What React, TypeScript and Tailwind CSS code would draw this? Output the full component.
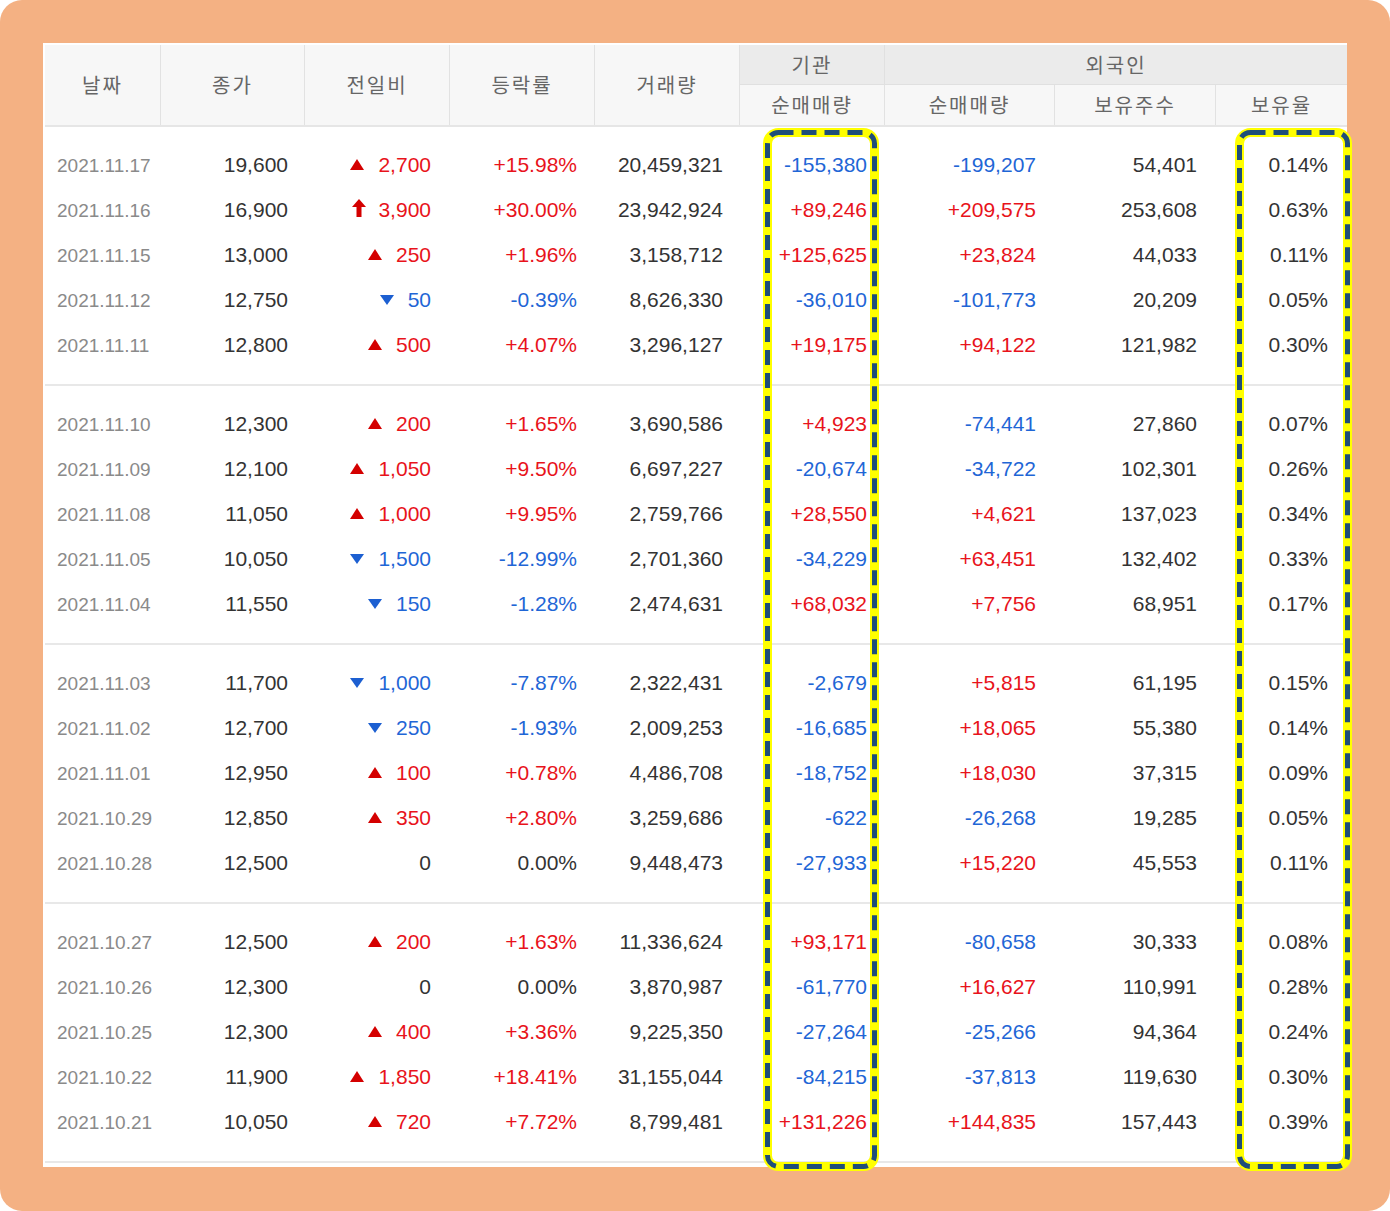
import React from "react";

type Dir = "up" | "down" | "upper" | "none";
type Row = [string, string, Dir, string, string, string, string, string, string, string];

const groups: Row[][] = [
  [
    ["2021.11.17", "19,600", "up", "2,700", "+15.98%", "20,459,321", "-155,380", "-199,207", "54,401", "0.14%"],
    ["2021.11.16", "16,900", "upper", "3,900", "+30.00%", "23,942,924", "+89,246", "+209,575", "253,608", "0.63%"],
    ["2021.11.15", "13,000", "up", "250", "+1.96%", "3,158,712", "+125,625", "+23,824", "44,033", "0.11%"],
    ["2021.11.12", "12,750", "down", "50", "-0.39%", "8,626,330", "-36,010", "-101,773", "20,209", "0.05%"],
    ["2021.11.11", "12,800", "up", "500", "+4.07%", "3,296,127", "+19,175", "+94,122", "121,982", "0.30%"],
  ],
  [
    ["2021.11.10", "12,300", "up", "200", "+1.65%", "3,690,586", "+4,923", "-74,441", "27,860", "0.07%"],
    ["2021.11.09", "12,100", "up", "1,050", "+9.50%", "6,697,227", "-20,674", "-34,722", "102,301", "0.26%"],
    ["2021.11.08", "11,050", "up", "1,000", "+9.95%", "2,759,766", "+28,550", "+4,621", "137,023", "0.34%"],
    ["2021.11.05", "10,050", "down", "1,500", "-12.99%", "2,701,360", "-34,229", "+63,451", "132,402", "0.33%"],
    ["2021.11.04", "11,550", "down", "150", "-1.28%", "2,474,631", "+68,032", "+7,756", "68,951", "0.17%"],
  ],
  [
    ["2021.11.03", "11,700", "down", "1,000", "-7.87%", "2,322,431", "-2,679", "+5,815", "61,195", "0.15%"],
    ["2021.11.02", "12,700", "down", "250", "-1.93%", "2,009,253", "-16,685", "+18,065", "55,380", "0.14%"],
    ["2021.11.01", "12,950", "up", "100", "+0.78%", "4,486,708", "-18,752", "+18,030", "37,315", "0.09%"],
    ["2021.10.29", "12,850", "up", "350", "+2.80%", "3,259,686", "-622", "-26,268", "19,285", "0.05%"],
    ["2021.10.28", "12,500", "none", "0", "0.00%", "9,448,473", "-27,933", "+15,220", "45,553", "0.11%"],
  ],
  [
    ["2021.10.27", "12,500", "up", "200", "+1.63%", "11,336,624", "+93,171", "-80,658", "30,333", "0.08%"],
    ["2021.10.26", "12,300", "none", "0", "0.00%", "3,870,987", "-61,770", "+16,627", "110,991", "0.28%"],
    ["2021.10.25", "12,300", "up", "400", "+3.36%", "9,225,350", "-27,264", "-25,266", "94,364", "0.24%"],
    ["2021.10.22", "11,900", "up", "1,850", "+18.41%", "31,155,044", "-84,215", "-37,813", "119,630", "0.30%"],
    ["2021.10.21", "10,050", "up", "720", "+7.72%", "8,799,481", "+131,226", "+144,835", "157,443", "0.39%"],
  ],
];

const COLS = "grid grid-cols-[116px_144px_145px_145px_145px_145px_170px_161px_131px]";

function signColor(v: string): string {
  if (v.startsWith("+")) return "text-[#e8131b]";
  if (v.startsWith("-")) return "text-[#1f66d6]";
  return "text-[#333333]";
}

function Icon({ dir }: { dir: Dir }) {
  if (dir === "up")
    return (
      <svg width="14" height="11" viewBox="0 0 14 11" className="mr-[14px]">
        <polygon points="7,0 14,11 0,11" fill="#d40000" />
      </svg>
    );
  if (dir === "down")
    return (
      <svg width="14" height="10" viewBox="0 0 14 10" className="mr-[14px]">
        <polygon points="0,0 14,0 7,10" fill="#1c5fd1" />
      </svg>
    );
  if (dir === "upper")
    return (
      <svg width="14" height="18" viewBox="0 0 14 18" className="mr-[12px] -mt-[4px]">
        <polygon points="7,0 14,8 9.5,8 9.5,18 4.5,18 4.5,8 0,8" fill="#d40000" />
      </svg>
    );
  return null;
}

function DashBox({ left, width }: { left: number; width: number }) {
  const h = 1043;
  return (
    <svg
      width={width}
      height={h}
      className="absolute top-[85px] pointer-events-none"
      style={{ left }}
    >
      <rect x="4.5" y="4.5" width={width - 9} height={h - 9} rx="11" fill="none" stroke="#ffff00" strokeWidth="9" />
      <rect
        x="4.5"
        y="4.5"
        width={width - 9}
        height={h - 9}
        rx="11"
        fill="none"
        stroke="#1f4e79"
        strokeWidth="5"
        strokeDasharray="15 8"
      />
    </svg>
  );
}

export default function App() {
  const num = "font-['Liberation_Sans',Arial,sans-serif]";
  const kr = "font-['Noto_Sans_CJK_KR','Noto_Sans',sans-serif] text-[20px] tracking-[2px] text-[#666666]";
  return (
    <div className="w-[1390px] h-[1211px] bg-white">
      <div className="w-full h-full bg-[#f4b183] rounded-[22px] pt-[43px] pl-[43px]">
        <div className="relative w-[1304px] h-[1124px] bg-white pt-[2px] pl-[2px]">
          {/* header */}
          <div className={`${COLS} grid-rows-[40px_40px] border-b-2 border-[#e6e6e6] ${kr}`}>
            {["날짜", "종가", "전일비", "등락률", "거래량"].map((t) => (
              <div
                key={t}
                className="row-span-2 flex items-center justify-center bg-[#f7f7f7] border-r border-[#e2e2e2]"
              >
                {t}
              </div>
            ))}
            <div className="flex items-center justify-center bg-[#ebebeb] border-r border-b border-[#e0e0e0]">
              기관
            </div>
            <div className="col-span-3 flex items-center justify-center bg-[#ebebeb] border-b border-[#e0e0e0]">
              외국인
            </div>
            <div className="flex items-center justify-center bg-[#f7f7f7] border-r border-[#e2e2e2]">순매매량</div>
            <div className="flex items-center justify-center bg-[#f7f7f7] border-r border-[#e2e2e2]">순매매량</div>
            <div className="flex items-center justify-center bg-[#f7f7f7] border-r border-[#e2e2e2]">보유주수</div>
            <div className="flex items-center justify-center bg-[#f7f7f7]">보유율</div>
          </div>
          {/* body */}
          {groups.map((g, gi) => (
            <div key={gi} className="pt-[15px] pb-[17px] border-b-2 border-[#e8e8e8]">
              {g.map((r) => (
                <div key={r[0]} className={`${COLS} h-[45px] items-center ${num} text-[21px] text-[#333333]`}>
                  <div className="pl-[12px] pt-[3px] text-[19px] text-[#8a8a8a]">{r[0]}</div>
                  <div className="text-right pr-[17px]">{r[1]}</div>
                  <div className="flex items-center justify-end pr-[19px]">
                    <Icon dir={r[2]} />
                    <span
                      className={
                        r[2] === "down" ? "text-[#1f66d6]" : r[2] === "none" ? "text-[#333333]" : "text-[#e8131b]"
                      }
                    >
                      {r[3]}
                    </span>
                  </div>
                  <div className={`text-right pr-[18px] ${signColor(r[4])}`}>{r[4]}</div>
                  <div className="text-right pr-[17px]">{r[5]}</div>
                  <div className={`text-right pr-[18px] ${signColor(r[6])}`}>{r[6]}</div>
                  <div className={`text-right pr-[19px] ${signColor(r[7])}`}>{r[7]}</div>
                  <div className="text-right pr-[19px]">{r[8]}</div>
                  <div className="text-right pr-[19px]">{r[9]}</div>
                </div>
              ))}
            </div>
          ))}
          <DashBox left={720} width={116} />
          <DashBox left={1192} width={117} />
        </div>
      </div>
    </div>
  );
}
